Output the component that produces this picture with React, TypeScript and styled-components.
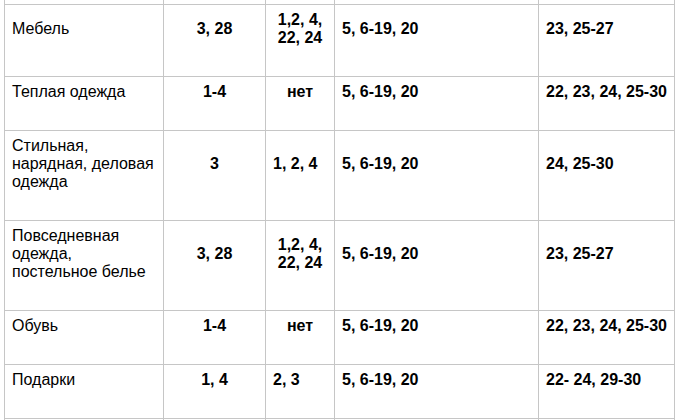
import React from "react";
import styled, { createGlobalStyle } from "styled-components";

const GlobalStyle = createGlobalStyle`
  html, body {
    margin: 0;
    padding: 0;
    background: #ffffff;
    overflow: hidden;
  }
  body {
    font-family: "Liberation Sans", Arial, sans-serif;
    color: #000;
  }
`;

const Grid = styled.div`
  display: grid;
  grid-template-columns: 158px 101px 68px 203px 135px;
  gap: 1px;
  padding: 0 1px;
  margin-left: 4px;
  width: max-content;
  background: #c6c6c6;
`;

type Align = "left" | "center";

const Cell = styled.div<{ $align?: Align; $bold?: boolean }>`
  background: #ffffff;
  display: flex;
  align-items: center;
  justify-content: ${(p) => (p.$align === "center" ? "center" : "flex-start")};
  text-align: ${(p) => (p.$align === "center" ? "center" : "left")};
  padding: 6px 7px 29px;
  font-size: 16px;
  line-height: 18px;
  font-weight: ${(p) => (p.$bold ? 700 : 400)};
  color: #000;
`;

const SpacerCell = styled.div<{ $h: number }>`
  background: #ffffff;
  height: ${(p) => p.$h}px;
`;

type Row = {
  name: string;
  c2: string;
  c3: string;
  c3Align: Align;
  c4: string;
  c5: string;
};

const rows: Row[] = [
  { name: "Мебель", c2: "3, 28", c3: "1,2, 4, 22, 24", c3Align: "center", c4: "5, 6-19, 20", c5: "23, 25-27" },
  { name: "Теплая одежда", c2: "1-4", c3: "нет", c3Align: "center", c4: "5, 6-19, 20", c5: "22, 23, 24, 25-30" },
  { name: "Стильная, нарядная, деловая одежда", c2: "3", c3: "1, 2, 4", c3Align: "left", c4: "5, 6-19, 20", c5: "24, 25-30" },
  { name: "Повседневная одежда, постельное белье", c2: "3, 28", c3: "1,2, 4, 22, 24", c3Align: "center", c4: "5, 6-19, 20", c5: "23, 25-27" },
  { name: "Обувь", c2: "1-4", c3: "нет", c3Align: "center", c4: "5, 6-19, 20", c5: "22, 23, 24, 25-30" },
  { name: "Подарки", c2: "1, 4", c3: "2, 3", c3Align: "left", c4: "5, 6-19, 20", c5: "22- 24, 29-30" },
];

const Spacer: React.FC<{ h: number }> = ({ h }) => (
  <>
    {[0, 1, 2, 3, 4].map((i) => (
      <SpacerCell key={i} $h={h} />
    ))}
  </>
);

export default function App() {
  return (
    <>
      <GlobalStyle />
      <Grid>
        <Spacer h={4} />
        {rows.map((r, i) => (
          <React.Fragment key={i}>
            <Cell $align="left">{r.name}</Cell>
            <Cell $align="center" $bold>{r.c2}</Cell>
            <Cell $align={r.c3Align} $bold>{r.c3}</Cell>
            <Cell $align="left" $bold>{r.c4}</Cell>
            <Cell $align="left" $bold>{r.c5}</Cell>
          </React.Fragment>
        ))}
        <Spacer h={40} />
      </Grid>
    </>
  );
}
